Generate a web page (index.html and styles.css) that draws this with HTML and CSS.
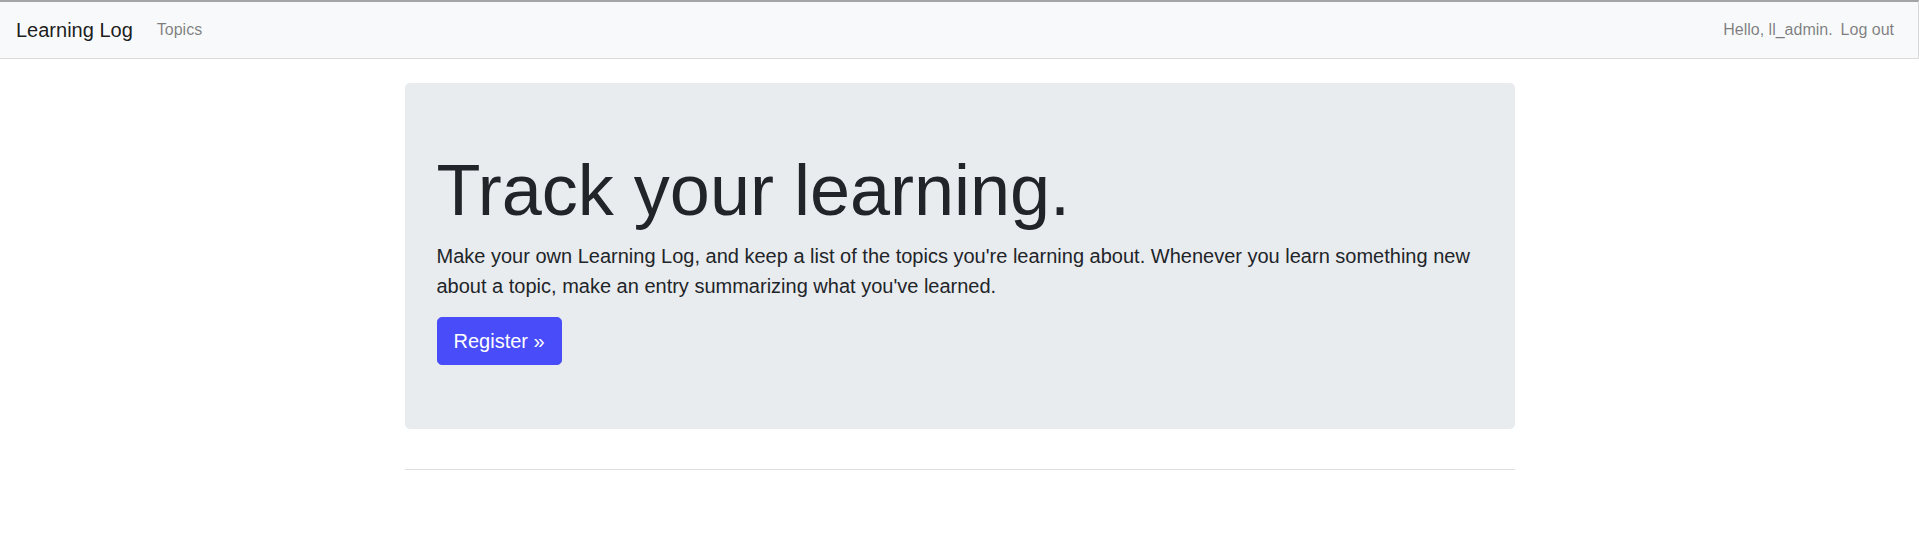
FILE: index.html
```html
<!DOCTYPE html>
<html lang="en">
<head>
<meta charset="utf-8">
<title>Learning Log</title>
<link rel="stylesheet" href="styles.css">
</head>
<body>
<nav class="navbar">
  <div class="nav-left">
    <a class="brand" href="#">Learning Log</a>
    <a class="nav-link" href="#">Topics</a>
  </div>
  <div class="nav-right">
    <span class="nav-text">Hello, ll_admin.</span>
    <a class="nav-link" href="#">Log out</a>
  </div>
</nav>
<main class="container">
  <div class="page-header">
    <div class="jumbotron">
      <h1 class="display">Track your learning.</h1>
      <p class="lead">Make your own Learning Log, and keep a list of the topics you're learning about. Whenever you learn something new about a topic, make an entry summarizing what you've learned.</p>
      <a class="btn" href="#">Register &raquo;</a>
    </div>
  </div>
  <hr class="rule">
</main>
</body>
</html>
```

FILE: styles.css
```css
* { box-sizing: border-box; }
html, body { margin: 0; padding: 0; }
body {
  font-family: "Liberation Sans", Arial, sans-serif;
  font-size: 16px;
  line-height: 1.5;
  color: #212529;
  background: #fff;
}
a { text-decoration: none; }

.navbar {
  display: flex;
  justify-content: space-between;
  align-items: center;
  padding: 8px 16px;
  background: #f8f9fa;
  border-top: 2px solid #a4a4a4;
  border-right: 1px solid #d8d8d8;
  border-bottom: 1px solid #dcdcdc;
}
.nav-left, .nav-right { display: flex; align-items: center; }
.brand {
  font-size: 20px;
  line-height: 30px;
  padding: 5px 0;
  margin-right: 16px;
  color: rgba(0,0,0,.9);
}
.nav-link {
  padding: 8px;
  color: rgba(0,0,0,.5);
}
.nav-text {
  color: rgba(0,0,0,.5);
  padding: 8px 0;
}

.container {
  width: 1140px;
  margin: 24px auto 0;
  padding: 0 15px;
}
.page-header { padding-bottom: 8px; }
.jumbotron {
  background: #e9ecef;
  border-radius: 4.8px;
  padding: 64px 32px;
  margin-bottom: 32px;
}
.display {
  font-size: 72px;
  font-weight: 300;
  line-height: 1.2;
  margin: 0 0 8px;
}
.lead {
  font-size: 20px;
  line-height: 30px;
  margin: 0 0 16px;
}
.btn {
  display: inline-block;
  font-size: 20px;
  line-height: 30px;
  padding: 8px 16px;
  border: 1px solid #484cf9;
  border-radius: 4.8px;
  background: #484cf9;
  color: #fff;
}
.rule {
  margin: 0;
  border: 0;
  border-top: 1px solid rgba(0,0,0,.12);
}
```
